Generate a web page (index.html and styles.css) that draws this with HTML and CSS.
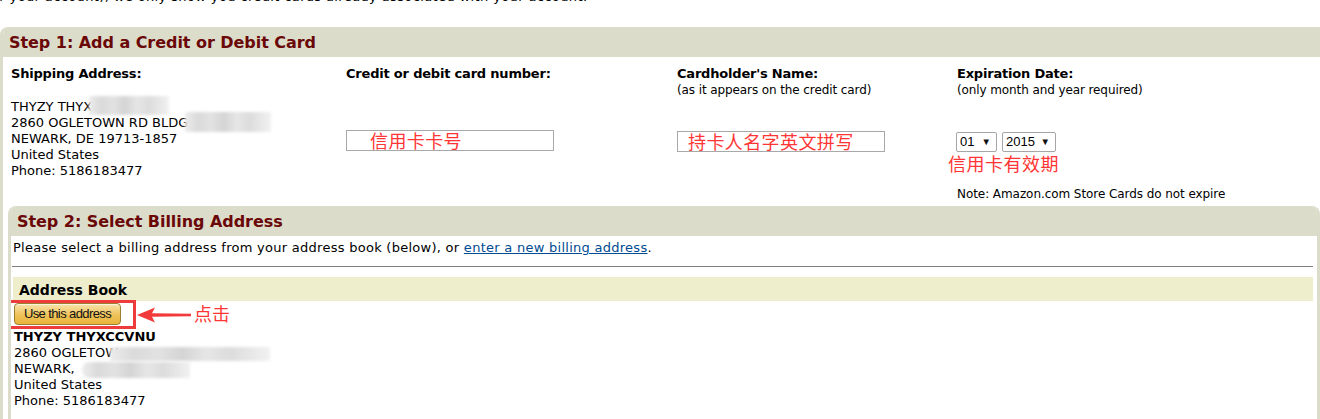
FILE: index.html
```html
<!DOCTYPE html>
<html>
<head>
<meta charset="utf-8">
<title>Add a Credit or Debit Card</title>
<link rel="stylesheet" href="styles.css">
</head>
<body>
<p class="intro">or your account), we only show you credit cards already associated with your account.</p>

<div class="step step1">
  <h2 class="step-title">Step 1: Add a Credit or Debit Card</h2>
  <div class="step1-body">
    <div class="card-grid">
      <div class="col">
        <div class="label">Shipping Address:</div>
        <div class="address address1">
          <div>THYZY THYX</div>
          <div>2860 OGLETOWN RD BLDG</div>
          <div>NEWARK, DE 19713-1857</div>
          <div>United States</div>
          <div>Phone: 5186183477</div>
          <span class="mosaic m1"></span>
          <span class="mosaic m2"></span>
        </div>
      </div>
      <div class="col">
        <div class="label">Credit or debit card number:</div>
        <div class="fake-input card-input">信用卡卡号</div>
      </div>
      <div class="col">
        <div class="label">Cardholder's Name:</div>
        <div class="sub">(as it appears on the credit card)</div>
        <div class="fake-input name-input">持卡人名字英文拼写</div>
      </div>
      <div class="col">
        <div class="label">Expiration Date:</div>
        <div class="sub">(only month and year required)</div>
        <div class="selects">
          <span class="select sel-month"><span>01</span><span class="caret">&#9660;</span></span>
          <span class="select sel-year"><span>2015</span><span class="caret">&#9660;</span></span>
        </div>
        <div class="annot">信用卡有效期</div>
        <div class="note">Note: Amazon.com Store Cards do not expire</div>
      </div>
    </div>

    <div class="step step2">
      <h2 class="step-title">Step 2: Select Billing Address</h2>
      <div class="step2-body">
        <div class="lead">Please select a billing address from your address book (below), or <a href="#" class="link">enter a new billing address</a>.</div>
        <hr class="divider">
        <div class="book-title">Address Book</div>
        <div class="use-row">
          <span class="btn">Use this address</span>
          <span class="highlight"></span>
          <svg class="arrow" width="56" height="16" viewBox="0 0 56 16">
            <polygon points="0,8 18,0.5 15,6.3 54,6.8 54,9.2 15,9.7 18,15.5" fill="#f23a3a"/>
          </svg>
          <span class="click-note">点击</span>
        </div>
        <div class="address address2">
          <div class="name">THYZY THYXCCVNU</div>
          <div>2860 OGLETOW</div>
          <div>NEWARK,</div>
          <div>United States</div>
          <div>Phone: 5186183477</div>
          <span class="mosaic m3"></span>
          <span class="mosaic m4"></span>
        </div>
      </div>
    </div>
  </div>
</div>
</body>
</html>
```

FILE: styles.css
```css
* {
  box-sizing: border-box;
}

html,
body {
  margin: 0;
  padding: 0;
}

body {
  width: 1320px;
  height: 419px;
  overflow: hidden;
  background: #fff;
  color: #000;
  font-family: "DejaVu Sans", Verdana, sans-serif;
  font-size: 13px;
  line-height: 16px;
}

.intro {
  margin: -11px 0 0 -9px;
  white-space: nowrap;
  letter-spacing: 0.38px;
}

.step {
  background: #fff;
  border-left: 3px solid #dcdccb;
  border-right: 3px solid #dcdccb;
  overflow: hidden;
}

.step1 {
  width: 1340px;
  margin-top: 22px;
  border-radius: 8px 0 0 0;
  height: 400px;
}

.step-title {
  margin: 0;
  height: 30px;
  padding-left: 6px;
  background: #dcdccb;
  color: #6a0808;
  font-size: 16px;
  font-weight: bold;
  line-height: 31px;
  letter-spacing: -0.05px;
}

.step1-body {
  padding: 9px 0 0 5px;
}

.card-grid {
  display: grid;
  grid-template-columns: 335px 331px 280px 1fr;
  padding-left: 3px;
}

.label {
  font-weight: bold;
  letter-spacing: -0.2px;
}

.sub {
  font-size: 12px;
  letter-spacing: -0.1px;
}

.address {
  position: relative;
}

.address1 {
  margin-top: 17px;
}

.fake-input {
  width: 208px;
  height: 21px;
  border: 1px solid #a8a8a8;
  color: #ff3535;
  font-family: "Noto Sans CJK SC", sans-serif;
  font-size: 18px;
  line-height: 19px;
  letter-spacing: 0.4px;
  white-space: nowrap;
}

.card-input {
  margin-top: 48px;
  padding-left: 23px;
}

.name-input {
  margin-top: 33px;
  padding-left: 10px;
}

.selects {
  display: flex;
  gap: 5px;
  margin: 34px 0 0 -1px;
}

.select {
  display: inline-flex;
  align-items: center;
  justify-content: space-between;
  height: 20px;
  padding: 0 5px 0 3px;
  border: 1px solid #a6a6a6;
  border-radius: 2px;
  background: #fff;
  font-family: "Liberation Sans", Arial, sans-serif;
  font-size: 13px;
}

.sel-month {
  width: 41px;
}

.sel-year {
  width: 54px;
}

.caret {
  font-size: 9.5px;
  color: #111;
}

.annot {
  margin: 1px 0 0 -9px;
  color: #ff3535;
  font-family: "Noto Sans CJK SC", sans-serif;
  font-size: 18px;
  line-height: 20px;
  letter-spacing: 0.5px;
}

.note {
  margin-top: 13px;
  font-size: 12px;
  letter-spacing: -0.07px;
}

.step2 {
  margin: 4px 17px 0 0;
  border-radius: 8px 8px 0 0;
  height: 230px;
}

.step2-body {
  padding: 4px 4px 0 2px;
}

.lead {
  letter-spacing: 0.27px;
}

.link {
  color: #004b91;
  text-decoration: underline;
}

.divider {
  height: 0;
  margin: 10px 0 10px -1px;
  border: 0;
  border-top: 1px solid #808080;
}

.book-title {
  height: 24px;
  padding-left: 6px;
  background: #eeeecc;
  font-size: 14px;
  font-weight: bold;
  line-height: 26px;
}

.use-row {
  position: relative;
  height: 22px;
  margin-top: 2px;
  padding-left: 1px;
}

.btn {
  display: inline-flex;
  align-items: center;
  justify-content: center;
  width: 107px;
  height: 22px;
  border: 1px solid #9c7e31;
  border-radius: 4px;
  background: linear-gradient(#f8e3ad, #eec35a 55%, #e9b43a);
  box-shadow: inset 0 1px 0 rgba(255, 255, 255, 0.6);
  color: #111;
  font-family: "Liberation Sans", Arial, sans-serif;
  font-size: 13px;
  letter-spacing: -0.6px;
}

.highlight {
  position: absolute;
  left: -5px;
  top: -3px;
  width: 128px;
  height: 29px;
  border: 3px solid #ee3b3b;
}

.arrow {
  position: absolute;
  left: 124px;
  top: 4px;
}

.click-note {
  position: absolute;
  left: 181px;
  top: 0;
  color: #ff3535;
  font-family: "Noto Sans CJK SC", sans-serif;
  font-size: 18px;
  line-height: 20px;
}

.address2 {
  margin-top: 4px;
  padding-left: 1px;
}

.name {
  font-weight: bold;
}

.mosaic {
  position: absolute;
  background: linear-gradient(90deg, #ececec 0%, #dadada 15%, #e2e2e2 30%, #d4d4d4 45%, #e6e6e6 60%, #dcdcdc 75%, #f1f1f1 100%);
  filter: blur(1.5px);
}

.m1 {
  left: 78px;
  top: -3px;
  width: 80px;
  height: 19px;
}

.m2 {
  left: 174px;
  top: 13px;
  width: 86px;
  height: 20px;
}

.m3 {
  left: 97px;
  top: 18px;
  width: 160px;
  height: 14px;
}

.m4 {
  left: 69px;
  top: 33px;
  width: 108px;
  height: 16px;
  border-radius: 8px 0 0 8px;
}
```
